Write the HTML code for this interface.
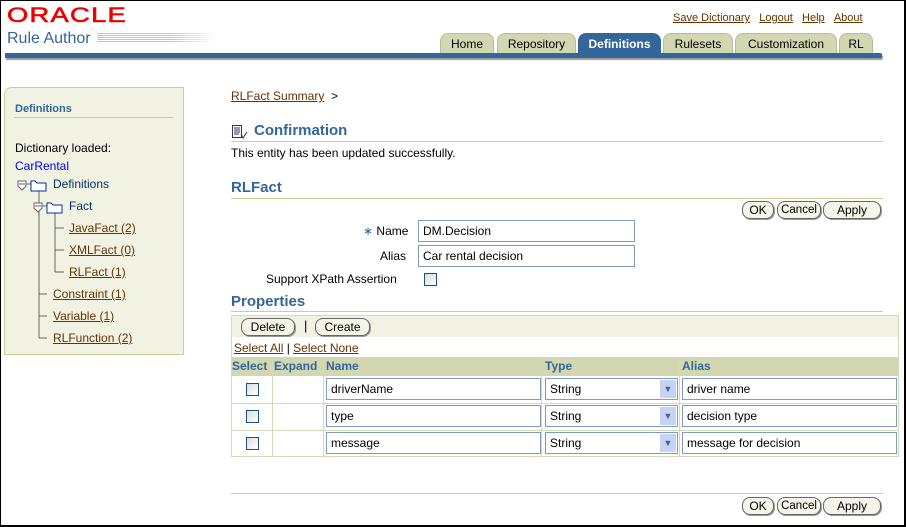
<!DOCTYPE html>
<html><head><style>
*{margin:0;padding:0;box-sizing:border-box}
body{width:906px;height:527px;position:relative;background:#fff;font-family:"Liberation Sans",Arial,sans-serif;font-size:12px;color:#000;overflow:hidden}
.frame{position:absolute;left:0;top:0;width:906px;height:527px;border:1px solid #000;border-right:2px solid #000;border-bottom:2px solid #000}
.a{position:absolute;white-space:nowrap}
.lnk{color:#663300;text-decoration:underline}
.tab{position:absolute;top:33px;height:21px;background:#d3d7b1;border:1px solid #b9bd95;border-bottom:none;border-radius:8px 8px 0 0;font-size:12px;text-align:center;line-height:21px;color:#000}
.tab.on{background:#336699;color:#fff;font-weight:bold;border-color:#336699}
.h{color:#336699;font-weight:bold;font-size:15px}
.rule{position:absolute;height:1px;background:#cccc99}
.btn{position:absolute;height:18px;border:1px solid #666;border-radius:8px;background:#f4f4e8;font-size:12px;text-align:center;line-height:16px;box-shadow:1px 1px 0 #999}
.inp{position:absolute;height:22px;border:1px solid #7f9db9;background:#fff;padding-left:4px;line-height:20px;font-size:12px}
.cb{position:absolute;width:13px;height:13px;border:1px solid #1c5180;background:linear-gradient(135deg,#dcdcd7,#fff)}
.c{position:absolute;border-right:1px solid #d5d9bb}
.tree{color:#003366}
</style></head><body>
<div class="a" style="left:7px;top:4px;color:#ee0000;font-size:21px;letter-spacing:1px;transform:scaleX(1.3);transform-origin:left;-webkit-text-stroke:0.6px #ee0000">ORACLE</div>
<div class="a" style="left:7px;top:30px;color:#336699;font-size:16px">Rule Author</div>
<div class="a" style="left:97px;top:33px;width:120px;height:10px;background:repeating-linear-gradient(#c8c8a0 0 1px,#fff 1px 2px);-webkit-mask:linear-gradient(90deg,#000 60%,transparent)"></div>
<div class="a" style="left:673px;top:12px;font-size:11px"><span class="lnk">Save Dictionary</span>&nbsp;&nbsp;&nbsp;<span class="lnk">Logout</span>&nbsp;&nbsp;&nbsp;<span class="lnk">Help</span>&nbsp;&nbsp;&nbsp;<span class="lnk">About</span></div>
<div class="tab" style="left:440px;width:54px">Home</div>
<div class="tab" style="left:497px;width:79px">Repository</div>
<div class="tab on" style="left:578px;width:83px">Definitions</div>
<div class="tab" style="left:663px;width:70px">Rulesets</div>
<div class="tab" style="left:735px;width:102px">Customization</div>
<div class="tab" style="left:839px;width:34px">RL</div>
<div class="a" style="left:5px;top:53px;width:877px;height:5px;background:#336699;box-shadow:1px 2px 1px #999;border-radius:0 2px 2px 0"></div>

<div class="a" style="left:4px;top:87px;width:180px;height:268px;background:#f2f2e2;border:1px solid #cccc99;border-radius:8px 0 0 0"></div>
<div class="a" style="left:15px;top:103px;color:#336699;font-weight:bold;font-size:11px">Definitions</div>
<div class="rule" style="left:14px;top:117px;width:159px"></div>
<div class="a" style="left:15px;top:141px">Dictionary loaded:</div>
<div class="a" style="left:15px;top:159px;color:#0000ff">CarRental</div>
<svg class="a" style="left:14px;top:175px" width="60" height="170">
<g stroke="#666" fill="none">
<line x1="25" y1="15" x2="25" y2="163"/><line x1="25" y1="119" x2="33" y2="119"/><line x1="25" y1="141" x2="33" y2="141"/><line x1="25" y1="163" x2="33" y2="163"/>
<line x1="41" y1="37" x2="41" y2="97"/><line x1="41" y1="53" x2="50" y2="53"/><line x1="41" y1="75" x2="50" y2="75"/><line x1="41" y1="97" x2="50" y2="97"/>
<path d="M4 6h8v5l-4 4l-4-4z" fill="#fff"/><line x1="5" y1="9" x2="11" y2="9"/><line x1="12" y1="9" x2="17" y2="9"/>
<path d="M17 6h4l2 2h9v8h-15z" stroke="#003399" fill="#fff"/>
<path d="M20 28h8v5l-4 4l-4-4z" fill="#fff"/><line x1="21" y1="31" x2="27" y2="31"/><line x1="28" y1="31" x2="33" y2="31"/>
<path d="M33 28h4l2 2h9v8h-15z" stroke="#003399" fill="#fff"/>
</g></svg>
<div class="a tree" style="left:53px;top:177px">Definitions</div>
<div class="a tree" style="left:69px;top:199px">Fact</div>
<div class="a lnk" style="left:69px;top:221px">JavaFact (2)</div>
<div class="a lnk" style="left:69px;top:243px">XMLFact (0)</div>
<div class="a lnk" style="left:69px;top:265px">RLFact (1)</div>
<div class="a lnk" style="left:53px;top:287px">Constraint (1)</div>
<div class="a lnk" style="left:53px;top:309px">Variable (1)</div>
<div class="a lnk" style="left:53px;top:331px">RLFunction (2)</div>

<div class="a" style="left:231px;top:89px"><span class="lnk">RLFact Summary</span> &nbsp;&gt;</div>
<svg class="a" style="left:231px;top:124px" width="18" height="16"><g stroke="#335" fill="none"><rect x="1.5" y="1.5" width="9" height="12" fill="#fff"/><path d="M3 4h6M3 6h6M3 8h6M3 10h5M10 10l2 4l4-6"/></g></svg>
<div class="a h" style="left:254px;top:122px">Confirmation</div>
<div class="rule" style="left:231px;top:141px;width:652px"></div>
<div class="a" style="left:231px;top:146px">This entity has been updated successfully.</div>
<div class="a h" style="left:231px;top:179px">RLFact</div>
<div class="rule" style="left:231px;top:198px;width:652px"></div>
<div class="btn" style="left:742px;top:201px;width:32px">OK</div>
<div class="btn" style="left:777px;top:201px;width:44px;font-size:11.5px">Cancel</div>
<div class="btn" style="left:823px;top:201px;width:58px">Apply</div>
<div class="a" style="left:363px;top:224px"><span style="color:#336699">∗</span> Name</div>
<div class="inp" style="left:418px;top:220px;width:217px">DM.Decision</div>
<div class="a" style="left:380px;top:249px">Alias</div>
<div class="inp" style="left:418px;top:245px;width:217px">Car rental decision</div>
<div class="a" style="left:266px;top:272px">Support XPath Assertion</div>
<div class="cb" style="left:424px;top:273px"></div>
<div class="a h" style="left:231px;top:293px">Properties</div>
<div class="rule" style="left:231px;top:311px;width:652px"></div>

<div class="a" style="left:231px;top:315px;width:668px;height:142px;border:1px solid #d5d9bb"></div>
<div class="a" style="left:232px;top:316px;width:666px;height:21px;background:#f2f2e2"></div>
<div class="btn" style="left:241px;top:318px;width:54px">Delete</div>
<div class="a" style="left:304px;top:318px;font-size:13px">|</div>
<div class="btn" style="left:315px;top:318px;width:55px">Create</div>
<div class="a" style="left:234px;top:341px"><span class="lnk">Select All</span> | <span class="lnk">Select None</span></div>
<div class="a" style="left:232px;top:357px;width:666px;height:19px;background:#d3d7b1"></div>
<div class="a" style="left:232px;top:359px;color:#336699;font-weight:bold">Select</div>
<div class="a" style="left:274px;top:359px;color:#336699;font-weight:bold">Expand</div>
<div class="a" style="left:326px;top:359px;color:#336699;font-weight:bold">Name</div>
<div class="a" style="left:545px;top:359px;color:#336699;font-weight:bold">Type</div>
<div class="a" style="left:682px;top:359px;color:#336699;font-weight:bold">Alias</div>
<div class="c" style="left:232px;top:357px;width:41px;height:99px"></div>
<div class="c" style="left:273px;top:357px;width:51px;height:99px"></div>
<div class="c" style="left:324px;top:357px;width:218px;height:99px"></div>
<div class="c" style="left:542px;top:357px;width:138px;height:99px"></div>
<div class="a" style="left:232px;top:403px;width:666px;height:1px;background:#d5d9bb"></div>
<div class="a" style="left:232px;top:430px;width:666px;height:1px;background:#d5d9bb"></div>

<div class="cb" style="left:246px;top:383px"></div>
<div class="inp" style="left:326px;top:378px;width:215px">driverName</div>
<div class="inp" style="left:545px;top:378px;width:133px">String<span style="position:absolute;right:1px;top:1px;width:16px;height:18px;background:#c5d3f5;color:#4d6185;font-size:9px;text-align:center;line-height:18px">▼</span></div>
<div class="inp" style="left:682px;top:378px;width:215px">driver name</div>
<div class="cb" style="left:246px;top:410px"></div>
<div class="inp" style="left:326px;top:405px;width:215px">type</div>
<div class="inp" style="left:545px;top:405px;width:133px">String<span style="position:absolute;right:1px;top:1px;width:16px;height:18px;background:#c5d3f5;color:#4d6185;font-size:9px;text-align:center;line-height:18px">▼</span></div>
<div class="inp" style="left:682px;top:405px;width:215px">decision type</div>
<div class="cb" style="left:246px;top:437px"></div>
<div class="inp" style="left:326px;top:432px;width:215px">message</div>
<div class="inp" style="left:545px;top:432px;width:133px">String<span style="position:absolute;right:1px;top:1px;width:16px;height:18px;background:#c5d3f5;color:#4d6185;font-size:9px;text-align:center;line-height:18px">▼</span></div>
<div class="inp" style="left:682px;top:432px;width:215px">message for decision</div>

<div class="rule" style="left:231px;top:493px;width:652px"></div>
<div class="btn" style="left:742px;top:497px;width:32px">OK</div>
<div class="btn" style="left:777px;top:497px;width:44px;font-size:11.5px">Cancel</div>
<div class="btn" style="left:823px;top:497px;width:58px">Apply</div>
<div class="frame"></div>
</body></html>
